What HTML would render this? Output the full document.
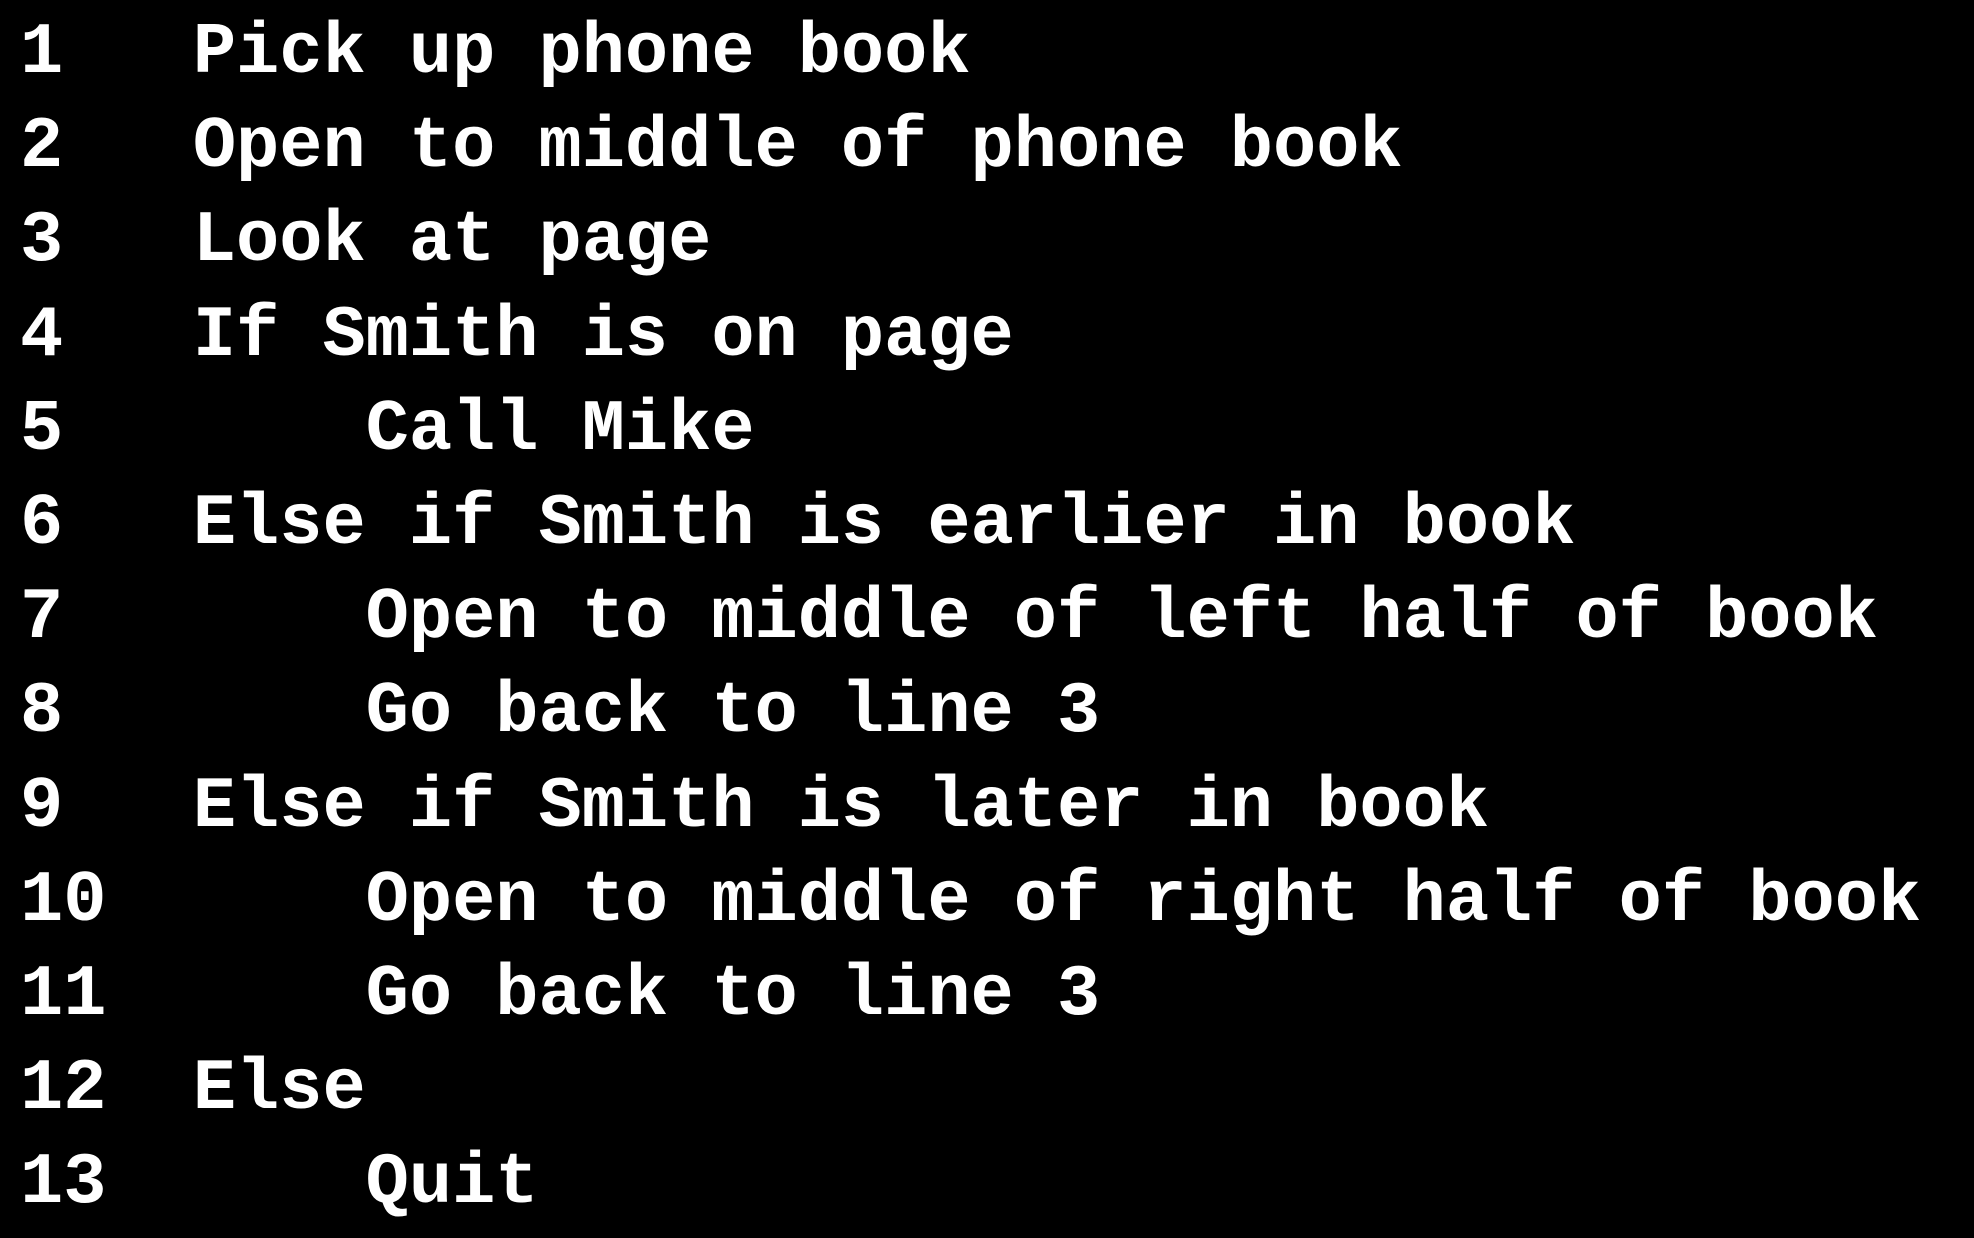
<!DOCTYPE html>
<html><head><meta charset="utf-8"><style>
html,body{margin:0;padding:0;background:#000;width:1974px;height:1238px;overflow:hidden}
pre{margin:0;padding:6px 0 0 20px;color:#fff;font-family:"Liberation Mono",monospace;font-weight:bold;font-size:72px;line-height:94.2px}
</style></head><body><pre>1   Pick up phone book
2   Open to middle of phone book
3   Look at page
4   If Smith is on page
5       Call Mike
6   Else if Smith is earlier in book
7       Open to middle of left half of book
8       Go back to line 3
9   Else if Smith is later in book
10      Open to middle of right half of book
11      Go back to line 3
12  Else
13      Quit</pre></body></html>
